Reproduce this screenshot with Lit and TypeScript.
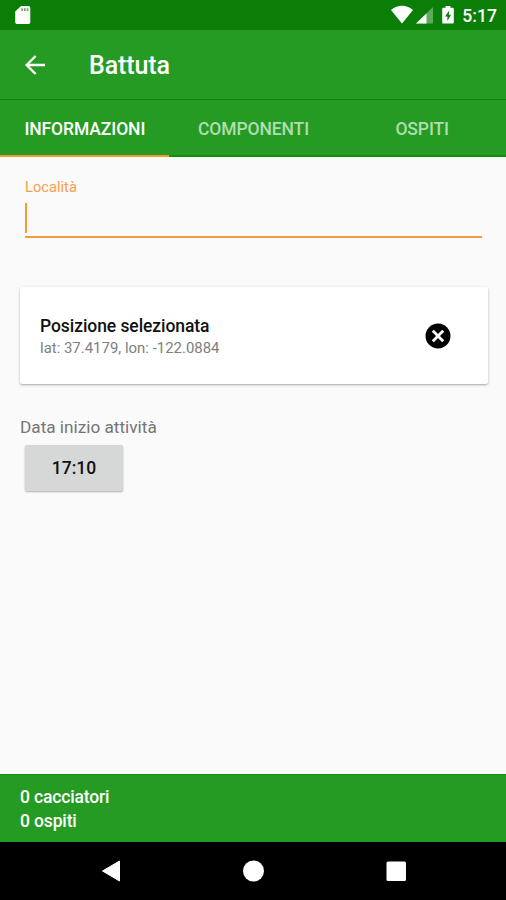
import { LitElement, html, css } from "lit";
import { customElement, state } from "lit/decorators.js";
import { classMap } from "lit/directives/class-map.js";

@customElement("app-root")
export class AppRoot extends LitElement {
  @state() private selected = 0;
  private tabs = ["INFORMAZIONI", "COMPONENTI", "OSPITI"];

  static styles = css`
    :host {
      display: flex;
      flex-direction: column;
      height: 900px;
      overflow: hidden;
      background: #fafafa;
      font-family: Roboto, "Liberation Sans", sans-serif;
      color: #000;
    }
    * { box-sizing: border-box; }
    svg { display: block; }
    .status {
      flex: none;
      height: 30px;
      background: #0a7e07;
      color: #fff;
      display: flex;
      align-items: center;
      padding: 0 9px 0 15px;
    }
    .spacer { flex: 1; }
    .battery { margin: 0 8px 0 8px; }
    .clock { font-size: 17.6px; font-weight: 500; line-height: 30px; padding-top: 2px; }
    .toolbar {
      flex: none;
      height: 69px;
      background: #259b24;
      display: flex;
      align-items: center;
      padding: 0 0 0 25px;
      color: #fff;
    }
    .title { margin: 0 0 0 44px; font-size: 25px; letter-spacing: -0.1px; font-weight: 500; line-height: 30px; padding-top: 3px; }
    .tabs {
      flex: none;
      height: 58px;
      background: #259b24;
      display: grid;
      grid-template-columns: repeat(3, 1fr);
      box-shadow: inset 0 2px 1px -1px #1d7f1c, inset 0 1px 0 #1f831e;
    }
    .tab {
      display: flex;
      align-items: center;
      justify-content: center;
      border-bottom: 2px solid #0f8f10;
      padding: 4px 0 0 1px;
      font-size: 17.5px;
      letter-spacing: -0.1px;
      font-weight: 500;
      color: #b0deae;
      white-space: nowrap;
    }
    .tab.on { color: #fff; border-bottom-color: #f59b38; }
    .content { flex: 1; display: flex; flex-direction: column; align-items: flex-start; padding: 20px 18px 0 20px; }
    .field { align-self: stretch; margin: 0 6px 0 5px; height: 61px; border-bottom: 2px solid #f59b38; }
    .label { font-size: 14.7px; line-height: 20px; color: #f7a04a; }
    .caret { width: 2px; height: 30px; margin-top: 6px; background: #f59b38; }
    .card {
      align-self: stretch;
      height: 97px;
      margin-top: 49px;
      background: #fff;
      border-radius: 2px;
      box-shadow: 0 1px 3px rgba(0, 0, 0, 0.25), 0 1px 1px rgba(0, 0, 0, 0.1);
      display: flex;
      align-items: center;
      justify-content: space-between;
      padding: 2px 37px 0 20px;
    }
    .clear { margin-bottom: 2px; }
    .name { font-size: 17.5px; letter-spacing: -0.07px; line-height: 22px; font-weight: 500; color: #111; }
    .coords { font-size: 14.95px; line-height: 22px; color: #808080; }
    .caption { margin-top: 32px; font-size: 17.2px; line-height: 22px; color: #757575; }
    .time {
      margin: 7px 0 0 5px;
      width: 98px;
      height: 46px;
      border: 0;
      border-radius: 2px;
      background: #d6d7d7;
      box-shadow: 0 1px 2px rgba(0, 0, 0, 0.3);
      font: 500 17.5px/46px Roboto, sans-serif;
      color: #111;
      padding: 0;
    }
    .summary {
      flex: none;
      height: 68px;
      background: #259b24;
      border-top: 1px solid #128e12;
      color: #fff;
      font-size: 17.5px;
      letter-spacing: -0.15px;
      font-weight: 500;
      line-height: 24px;
      padding: 10px 20px 0;
    }
    .nav { flex: none; height: 58px; background: #000; }
  `;

  render() {
    return html`
      <div class="status">
        <svg width="17" height="20" viewBox="0 0 17 20">
          <path d="M6 1H13.5A1.8 1.8 0 0 1 15.3 2.8V17.2A1.8 1.8 0 0 1 13.5 19H2A1.8 1.8 0 0 1 .2 17.2V6.6Z" fill="#fff" />
          <path d="M6.3 3.3h1.6v2.600H6.3zM9 3.300h1.6v2.600H9zM11.7 3.300h1.6v2.600h-1.6z" fill="#5fa85d" />
        </svg>
        <div class="spacer"></div>
        <svg width="43" height="20" viewBox="0 0 43 20">
          <path d="M0 5Q11 -3.4 22 5L11 18.6Z" fill="#fff" />
          <path d="M42 2V18.6H25Z" fill="#fff" fill-opacity=".35" />
          <path d="M35.500 8.400V18.600H25Z" fill="#fff" />
        </svg>
        <svg class="battery" width="12" height="20" viewBox="0 0 12 20">
          <path d="M3.6 1h4.8v1.8h2.2A1.2 1.2 0 0 1 11.8 4v13.4a1.2 1.2 0 0 1-1.2 1.2H1.4A1.2 1.2 0 0 1 .2 17.4V4a1.2 1.2 0 0 1 1.2-1.2h2.2z" fill="#fff" />
          <path d="M7.2 5.5L3 11.6h2.4V16L9 9.8H6.8z" fill="#0a7e07" />
        </svg>
        <span class="clock">5:17</span>
      </div>
      <header class="toolbar">
        <svg width="20" height="20" viewBox="0 0 20 20">
          <path d="M20 10H2M10.6 1L1.6 10L10.6 19" fill="none" stroke="#fff" stroke-width="2.4" />
        </svg>
        <h1 class="title">Battuta</h1>
      </header>
      <nav class="tabs">
        ${this.tabs.map(
          (t, i) => html`<div class=${classMap({ tab: true, on: i === this.selected })} @click=${() => (this.selected = i)}>${t}</div>`
        )}
      </nav>
      <main class="content">
        <div class="field">
          <div class="label">Località</div>
          <div class="caret"></div>
        </div>
        <section class="card">
          <div>
            <div class="name">Posizione selezionata</div>
            <div class="coords">lat: 37.4179, lon: -122.0884</div>
          </div>
          <svg class="clear" width="26" height="26" viewBox="0 0 26 26">
            <circle cx="13" cy="13" r="12.5" fill="#000" />
            <path d="M7.800 7.800L18.200 18.200M18.200 7.800L7.800 18.200" stroke="#fff" stroke-width="2.8" />
          </svg>
        </section>
        <div class="caption">Data inizio attività</div>
        <button class="time">17:10</button>
      </main>
      <footer class="summary">
        <div>0 cacciatori</div>
        <div>0 ospiti</div>
      </footer>
      <div class="nav">
        <svg width="506" height="58" viewBox="0 0 506 58">
          <path d="M102.5 29L119.5 19V39Z" fill="#fff" stroke="#fff" stroke-linejoin="round" />
          <circle cx="253.5" cy="29" r="10.5" fill="#fff" />
          <rect x="386.5" y="19.5" width="19.5" height="19.5" rx="1.5" fill="#fff" />
        </svg>
      </div>
    `;
  }
}
